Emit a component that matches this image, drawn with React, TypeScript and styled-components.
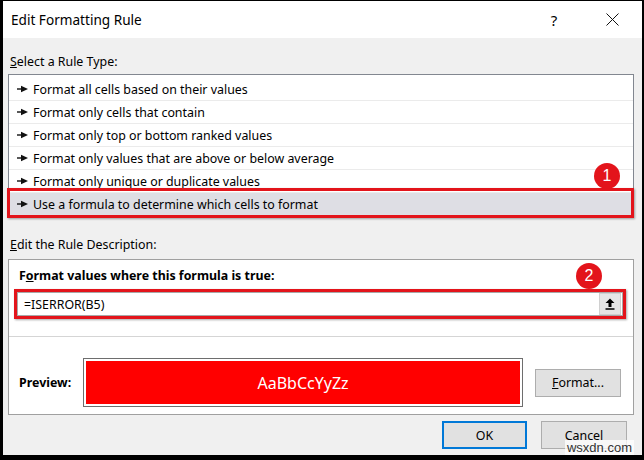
import React from "react";
import styled, { createGlobalStyle } from "styled-components";

const GlobalStyle = createGlobalStyle`
  html, body {
    margin: 0;
    padding: 0;
    background: #000;
  }
  body {
    font-family: "Segoe UI", "Noto Sans", sans-serif;
    font-size: 12.4px;
    color: #000;
  }
`;

const Frame = styled.div`
  position: relative;
  width: 644px;
  height: 460px;
  box-sizing: border-box;
  border-style: solid;
  border-color: #000;
  border-width: 1px 2px 5px 3px;
  background: #f0f0f0;
  display: flex;
  flex-direction: column;
`;

const TitleBar = styled.header`
  height: 37px;
  background: #fff;
  display: flex;
  align-items: center;
  padding: 0 7px 0 8px;
`;

const Title = styled.h1`
  margin: 0;
  font-size: 13.6px;
  font-weight: 400;
`;

const TitleButtons = styled.div`
  margin-left: auto;
  display: flex;
  gap: 12px;
`;

const TitleButton = styled.span`
  width: 46px;
  height: 30px;
  display: flex;
  align-items: center;
  justify-content: center;
  font-size: 15px;
`;

const Body = styled.main`
  flex: 1;
  padding: 0 8px 0 5px;
  display: flex;
  flex-direction: column;
`;

const SectionLabel = styled.div<{ $top: number }>`
  height: 20px;
  line-height: 20px;
  margin-top: ${({ $top }) => $top}px;
  margin-bottom: 2px;
  padding-left: 2px;
  u {
    text-decoration-thickness: 1px;
  }
`;

const RuleList = styled.ul`
  list-style: none;
  margin: 0;
  padding: 3px 0 0;
  border: 1px solid #828790;
  background: #fff;
`;

const RuleRow = styled.li<{ $selected?: boolean }>`
  position: relative;
  height: 23px;
  box-sizing: border-box;
  display: flex;
  align-items: center;
  gap: 4px;
  padding-left: 8px;
  border-bottom: 1px solid ${({ $selected }) => ($selected ? "transparent" : "#ebebeb")};
  background: ${({ $selected }) => ($selected ? "#dedee4" : "#fff")};
`;

const Marker = styled.span<{ $inset: string }>`
  position: absolute;
  inset: ${({ $inset }) => $inset};
  border: 3px solid #e3141b;
  box-shadow: 1px 1px 2px rgba(0, 0, 0, 0.35);
  pointer-events: none;
`;

const Badge = styled.span<{ $top: number; $right: number }>`
  position: absolute;
  top: ${({ $top }) => $top}px;
  right: ${({ $right }) => $right}px;
  width: 26px;
  height: 26px;
  border-radius: 50%;
  background: #e3141b;
  color: #fff;
  font-family: "Liberation Sans", Arial, sans-serif;
  font-size: 16px;
  display: flex;
  align-items: center;
  justify-content: center;
`;

const GroupBox = styled.section`
  height: 156px;
  margin-top: 2px;
  box-sizing: border-box;
  border: 1px solid #a0a0a0;
  background: #fff;
  padding-top: 7px;
  display: flex;
  flex-direction: column;
`;

const GroupHeading = styled.div`
  height: 18px;
  line-height: 18px;
  padding-left: 10px;
  font-weight: 700;
`;

const FormulaWrap = styled.div`
  position: relative;
  margin: 4px 7px 0 5px;
  border: 3px solid #e3141b;
  box-shadow: 1px 1px 2px rgba(0, 0, 0, 0.35);
`;

const FormulaField = styled.div`
  height: 24px;
  box-sizing: border-box;
  border: 1px solid #a8a8a8;
  background: #fff;
  display: flex;
  align-items: center;
  padding: 0 1px 0 6px;
`;

const FormulaText = styled.span`
  flex: 1;
`;

const CollapseButton = styled.span`
  width: 22px;
  height: 22px;
  box-sizing: border-box;
  border: 1px solid #d0d0d0;
  background: #e6e6e6;
  display: flex;
  align-items: center;
  justify-content: center;
`;

const Divider = styled.hr`
  margin: 17px 0 0;
  border: 0;
  border-top: 1px solid #d5d5d5;
`;

const PreviewRow = styled.div`
  margin-top: 21px;
  display: flex;
  align-items: center;
  padding-left: 10px;
`;

const PreviewLabel = styled.span`
  width: 64px;
  font-weight: 700;
`;

const PreviewBox = styled.div`
  width: 440px;
  height: 49px;
  box-sizing: border-box;
  border: 1px solid #6e6e6e;
  padding: 2px;
  background: #fff;
`;

const PreviewSample = styled.div`
  height: 100%;
  background: #ff0000;
  color: #fff;
  font-size: 16px;
  display: flex;
  align-items: center;
  justify-content: center;
`;

const Button = styled.button<{ $primary?: boolean }>`
  width: ${({ $primary }) => ($primary ? "85px" : "86px")};
  height: 28px;
  box-sizing: border-box;
  border: ${({ $primary }) => ($primary ? "2px solid #0078d7" : "1px solid #adadad")};
  background: #e1e1e1;
  font: inherit;
  color: #000;
  padding: 0;
  u {
    text-decoration-thickness: 1px;
  }
`;

const FormatButton = styled(Button)`
  margin-left: 12px;
`;

const Footer = styled.footer`
  margin-top: 6px;
  display: flex;
  justify-content: flex-end;
  gap: 14px;
  padding-right: 7px;
`;

const Watermark = styled.span`
  position: absolute;
  right: 8px;
  bottom: 0;
  padding: 0 2px;
  font-family: "Liberation Sans", Arial, sans-serif;
  font-size: 13px;
  line-height: 15px;
  color: #333;
  background: rgba(255, 255, 255, 0.75);
`;

const Pointer = () => (
  <svg width="12" height="8" viewBox="0 0 12 8">
    <path d="M0 4H5" stroke="#111" strokeWidth="1.4" />
    <path d="M4 0.8L11 4L4 7.2Z" fill="#111" />
  </svg>
);

const CloseIcon = () => (
  <svg width="13" height="13" viewBox="0 0 13 13">
    <path d="M0.5 0.5L12.5 12.5M12.5 0.5L0.5 12.5" stroke="#111" strokeWidth="1" />
  </svg>
);

const UploadIcon = () => (
  <svg width="10" height="12" viewBox="0 0 10 12">
    <path d="M5 0.5L9.5 5H6.5V9H3.5V5H0.5Z" fill="#000" />
    <path d="M0.5 11H9.5" stroke="#000" strokeWidth="1.5" />
  </svg>
);

const rules = [
  "Format all cells based on their values",
  "Format only cells that contain",
  "Format only top or bottom ranked values",
  "Format only values that are above or below average",
  "Format only unique or duplicate values",
  "Use a formula to determine which cells to format",
];

export default function App() {
  return (
    <>
      <GlobalStyle />
      <Frame>
        <TitleBar>
          <Title>Edit Formatting Rule</Title>
          <TitleButtons>
            <TitleButton>?</TitleButton>
            <TitleButton>
              <CloseIcon />
            </TitleButton>
          </TitleButtons>
        </TitleBar>

        <Body>
          <SectionLabel $top={14}>
            <u>S</u>elect a Rule Type:
          </SectionLabel>
          <RuleList>
            {rules.map((rule, i) => {
              const selected = i === rules.length - 1;
              return (
                <RuleRow key={rule} $selected={selected}>
                  <Pointer />
                  <span>{rule}</span>
                  {selected && (
                    <Marker $inset="-5px -1px -3px -2px">
                      <Badge $top={-28} $right={11}>1</Badge>
                    </Marker>
                  )}
                </RuleRow>
              );
            })}
          </RuleList>

          <SectionLabel $top={18}>
            <u>E</u>dit the Rule Description:
          </SectionLabel>
          <GroupBox>
            <GroupHeading>
              F<u>o</u>rmat values where this formula is true:
            </GroupHeading>
            <FormulaWrap>
              <FormulaField>
                <FormulaText>=ISERROR(B5)</FormulaText>
                <CollapseButton>
                  <UploadIcon />
                </CollapseButton>
              </FormulaField>
              <Badge $top={-29} $right={21}>2</Badge>
            </FormulaWrap>
            <Divider />
            <PreviewRow>
              <PreviewLabel>Preview:</PreviewLabel>
              <PreviewBox>
                <PreviewSample>AaBbCcYyZz</PreviewSample>
              </PreviewBox>
              <FormatButton>
                <u>F</u>ormat...
              </FormatButton>
            </PreviewRow>
          </GroupBox>

          <Footer>
            <Button $primary>OK</Button>
            <Button>Cancel</Button>
          </Footer>
        </Body>

        <Watermark>wsxdn.com</Watermark>
      </Frame>
    </>
  );
}
